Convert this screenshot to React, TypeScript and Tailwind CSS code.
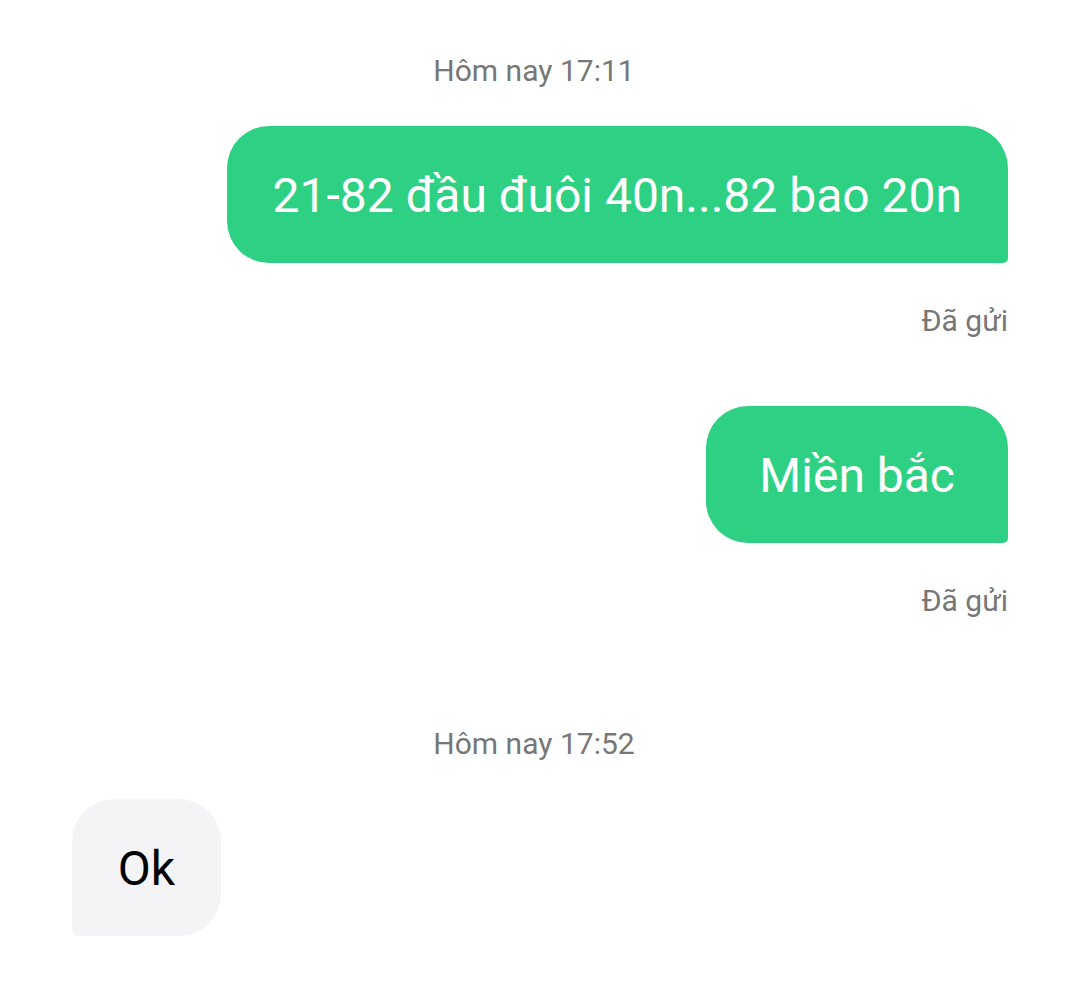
export default function App() {
  const font = { fontFamily: 'Roboto, "Noto Sans", sans-serif' };
  return (
    <div className="w-[1080px] h-[994px] bg-white overflow-hidden" style={font}>
      <div className="flex flex-col px-[72px]">
        <div className="mt-[52px] h-[38px] pr-[12px] flex items-center justify-center text-[30px] text-[#777777] leading-none">
          Hôm nay 17:11
        </div>
        <div className="mt-[36px] flex justify-end">
          <div className="h-[137px] flex items-center pt-[2px] px-[46px] bg-[#2ed183] text-white text-[48px] leading-none rounded-tl-[42px] rounded-tr-[42px] rounded-bl-[42px] rounded-br-[5px]">
            21-82 đầu đuôi 40n...82 bao 20n
          </div>
        </div>
        <div className="mt-[42px] h-[32px] flex items-center justify-end text-[30px] text-[#777777] leading-none">
          Đã gửi
        </div>
        <div className="mt-[69px] flex justify-end">
          <div className="h-[137px] flex items-center pt-[3px] px-[53px] bg-[#2ed183] text-white text-[48px] leading-none rounded-tl-[42px] rounded-tr-[42px] rounded-bl-[42px] rounded-br-[5px]">
            Miền bắc
          </div>
        </div>
        <div className="mt-[42px] h-[32px] flex items-center justify-end text-[30px] text-[#777777] leading-none">
          Đã gửi
        </div>
        <div className="mt-[111px] h-[32px] pr-[12px] flex items-center justify-center text-[30px] text-[#777777] leading-none">
          Hôm nay 17:52
        </div>
        <div className="mt-[39px] flex justify-start">
          <div className="h-[137px] w-[149px] flex items-center justify-center pt-[2px] bg-[#f4f4f6] text-black text-[48px] leading-none rounded-tl-[42px] rounded-tr-[42px] rounded-br-[42px] rounded-bl-[5px]">
            Ok
          </div>
        </div>
      </div>
    </div>
  );
}
